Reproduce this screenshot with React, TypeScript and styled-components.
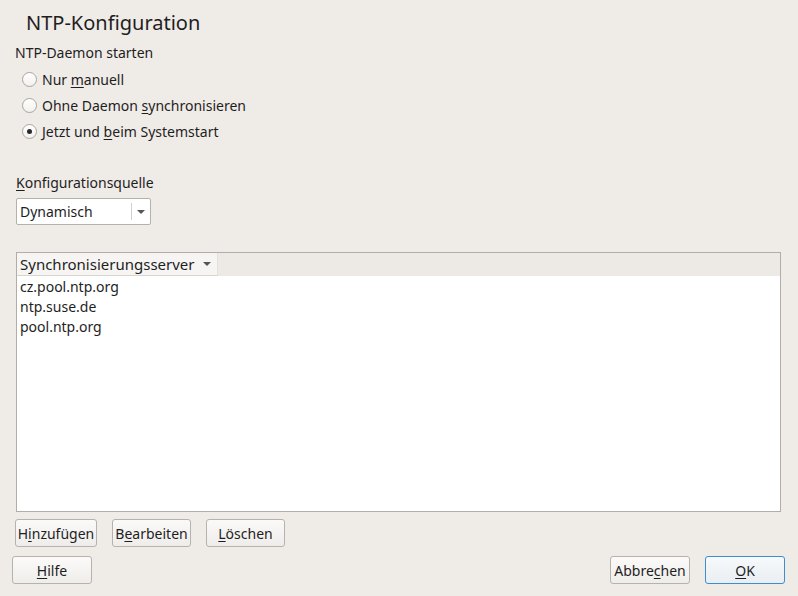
import React from "react";
import styled, { createGlobalStyle } from "styled-components";

const Global = createGlobalStyle`
  html, body { margin: 0; padding: 0; }
  body { font-family: "Noto Sans", "Open Sans", sans-serif; font-size: 14px; color: #1e1e1e; background: #efebe7; }
`;

const Page = styled.div`
  width: 798px;
  height: 596px;
  box-sizing: border-box;
  background: #efebe7;
  display: flex;
  flex-direction: column;
  padding: 0 13px 12px 12px;
  overflow: hidden;
`;

const Title = styled.h1`
  margin: 10px 0 0 14px;
  font-size: 20px;
  font-weight: 400;
  line-height: 26px;
`;

const Content = styled.div`
  flex: 1;
  display: flex;
  flex-direction: column;
  padding: 0 4px 0 3px;
`;

const GroupLabel = styled.div`
  margin-top: 7px;
  line-height: 20px;
`;

const RadioList = styled.div`
  display: flex;
  flex-direction: column;
  margin-top: 3px;
  padding-left: 7px;
`;

const RadioRow = styled.label`
  display: flex;
  align-items: center;
  height: 26px;
  gap: 5px;
`;

const RadioCircle = styled.span<{ $checked?: boolean }>`
  width: 13px;
  height: 13px;
  border-radius: 50%;
  border: 1px solid #a9a6a2;
  background: linear-gradient(#ffffff, #f3f1ee);
  display: flex;
  align-items: center;
  justify-content: center;
  &::after {
    content: "";
    width: 5px;
    height: 5px;
    border-radius: 50%;
    background: #2a2a2a;
    display: ${(p) => (p.$checked ? "block" : "none")};
  }
`;

const U = styled.span`
  text-decoration: underline;
  text-underline-offset: 2px;
`;

const FieldLabel = styled.div`
  margin-top: 29px;
  margin-left: 1px;
  line-height: 20px;
`;

const Combo = styled.div`
  margin-top: 5px;
  margin-left: 1px;
  width: 135px;
  height: 27px;
  box-sizing: border-box;
  border: 1px solid #b5b2ae;
  border-radius: 2px;
  background: #ffffff;
  display: flex;
  align-items: stretch;
`;

const ComboText = styled.div`
  flex: 1;
  display: flex;
  align-items: center;
  padding-left: 3px;
`;

const ComboArrow = styled.div`
  width: 18px;
  border-left: 1px solid #d3d0cc;
  margin: 4px 0;
  display: flex;
  align-items: center;
  justify-content: center;
`;

const Caret = styled.span`
  width: 0;
  height: 0;
  border-left: 4px solid transparent;
  border-right: 4px solid transparent;
  border-top: 4px solid #555;
`;

const Table = styled.div`
  margin-top: 27px;
  margin-left: 1px;
  flex: 0 0 260px;
  box-sizing: border-box;
  border: 1px solid #b1aea9;
  background: #ffffff;
  display: flex;
  flex-direction: column;
`;

const HeaderBar = styled.div`
  height: 23px;
  background: #edeae6;
  display: flex;
`;

const HeaderCell = styled.div`
  width: 201px;
  box-sizing: border-box;
  background: #f6f5f3;
  border-bottom: 1px solid #d8d5d1;
  border-right: 1px solid #e4e1dd;
  display: flex;
  align-items: center;
  justify-content: space-between;
  padding: 0 6px 0 3px;
  font-size: 15px;
`;

const Rows = styled.div`
  display: flex;
  flex-direction: column;
  padding-top: 1px;
`;

const Row = styled.div`
  height: 20px;
  line-height: 20px;
  padding-left: 3px;
`;

const ButtonRow = styled.div`
  display: flex;
  gap: 15px;
  margin-top: 7px;
`;

const Button = styled.button<{ $default?: boolean; $w?: number }>`
  font-family: inherit;
  font-size: 14px;
  color: #1e1e1e;
  width: ${(p) => p.$w ?? 80}px;
  height: 28px;
  box-sizing: border-box;
  padding: 0;
  border-radius: 3px;
  border: 1px solid ${(p) => (p.$default ? "#3c8ed0" : "#b6b3af")};
  background: ${(p) => (p.$default ? "linear-gradient(#f7f9fb, #e9eef2)" : "linear-gradient(#fbfaf9, #efedea)")};
  display: flex;
  align-items: center;
  justify-content: center;
`;

const Footer = styled.div`
  margin-top: 9px;
  display: flex;
  align-items: center;
`;

const Spacer = styled.div`
  flex: 1;
`;

const FooterRight = styled.div`
  display: flex;
  gap: 15px;
`;

export default function App() {
  return (
    <>
      <Global />
      <Page>
        <Title>NTP-Konfiguration</Title>
        <Content>
          <GroupLabel>NTP-Daemon starten</GroupLabel>
          <RadioList>
            <RadioRow>
              <RadioCircle />
              <span>Nur <U>m</U>anuell</span>
            </RadioRow>
            <RadioRow>
              <RadioCircle />
              <span>Ohne Daemon <U>s</U>ynchronisieren</span>
            </RadioRow>
            <RadioRow>
              <RadioCircle $checked />
              <span>Jetzt und <U>b</U>eim Systemstart</span>
            </RadioRow>
          </RadioList>
          <FieldLabel><U>K</U>onfigurationsquelle</FieldLabel>
          <Combo>
            <ComboText>Dynamisch</ComboText>
            <ComboArrow><Caret /></ComboArrow>
          </Combo>
          <Table>
            <HeaderBar>
              <HeaderCell>
                <span>Synchronisierungsserver</span>
                <Caret />
              </HeaderCell>
            </HeaderBar>
            <Rows>
              <Row>cz.pool.ntp.org</Row>
              <Row>ntp.suse.de</Row>
              <Row>pool.ntp.org</Row>
            </Rows>
          </Table>
          <ButtonRow>
            <Button $w={82}>H<U>i</U>nzufügen</Button>
            <Button $w={79}>B<U>e</U>arbeiten</Button>
            <Button $w={79}><U>L</U>öschen</Button>
          </ButtonRow>
        </Content>
        <Footer>
          <Button><U>H</U>ilfe</Button>
          <Spacer />
          <FooterRight>
            <Button>Abbre<U>c</U>hen</Button>
            <Button $default><U>O</U>K</Button>
          </FooterRight>
        </Footer>
      </Page>
    </>
  );
}
